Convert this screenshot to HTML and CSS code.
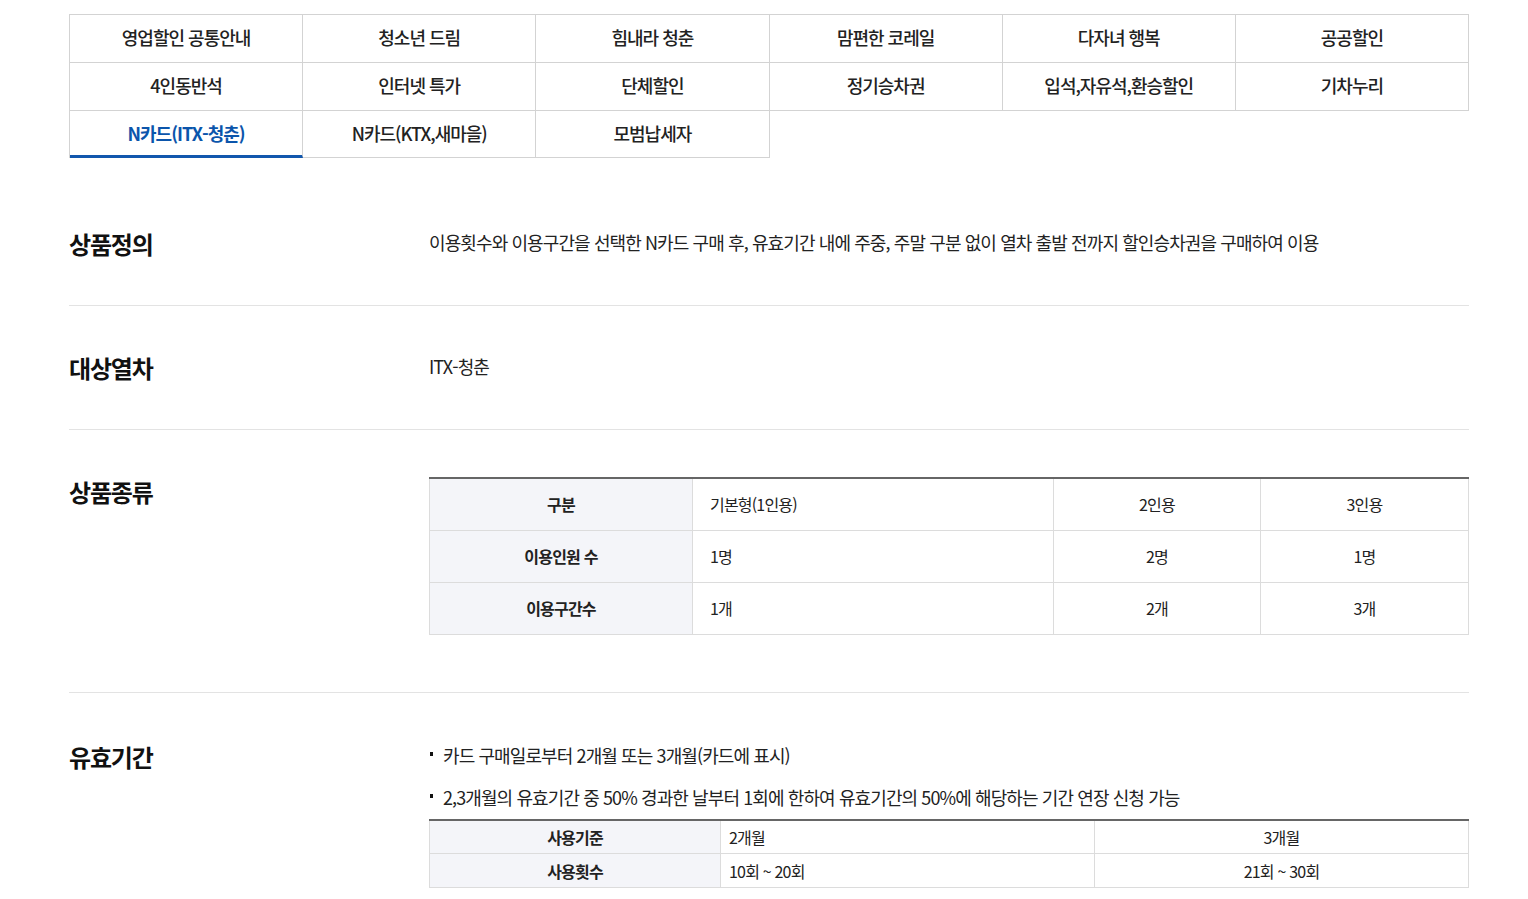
FILE: index.html
```html
<!DOCTYPE html>
<html lang="ko">
<head>
<meta charset="utf-8">
<title>N카드(ITX-청춘)</title>
<link rel="stylesheet" href="styles.css">
</head>
<body>
<div class="page">
  <ul class="tabs">
    <li class="tab">영업할인 공통안내</li>
    <li class="tab">청소년 드림</li>
    <li class="tab">힘내라 청춘</li>
    <li class="tab">맘편한 코레일</li>
    <li class="tab">다자녀 행복</li>
    <li class="tab">공공할인</li>
    <li class="tab">4인동반석</li>
    <li class="tab">인터넷 특가</li>
    <li class="tab">단체할인</li>
    <li class="tab">정기승차권</li>
    <li class="tab">입석,자유석,환승할인</li>
    <li class="tab">기차누리</li>
    <li class="tab last-row active">N카드(ITX-청춘)</li>
    <li class="tab last-row">N카드(KTX,새마을)</li>
    <li class="tab last-row">모범납세자</li>
  </ul>

  <section class="sec first">
    <h3 class="label">상품정의</h3>
    <div class="body"><p class="txt">이용횟수와 이용구간을 선택한 N카드 구매 후, 유효기간 내에 주중, 주말 구분 없이 열차 출발 전까지 할인승차권을 구매하여 이용</p></div>
  </section>

  <section class="sec">
    <h3 class="label">대상열차</h3>
    <div class="body"><p class="txt">ITX-청춘</p></div>
  </section>

  <section class="sec">
    <h3 class="label">상품종류</h3>
    <div class="body">
      <table class="tbl t1">
        <colgroup><col class="c1a"><col class="c1b"><col class="c1c"><col class="c1d"></colgroup>
        <tr><th>구분</th><td class="left">기본형(1인용)</td><td>2인용</td><td>3인용</td></tr>
        <tr><th>이용인원 수</th><td class="left">1명</td><td>2명</td><td>1명</td></tr>
        <tr><th>이용구간수</th><td class="left">1개</td><td>2개</td><td>3개</td></tr>
      </table>
    </div>
  </section>

  <section class="sec last">
    <h3 class="label">유효기간</h3>
    <div class="body">
      <ul class="bullets">
        <li>카드 구매일로부터 2개월 또는 3개월(카드에 표시)</li>
        <li>2,3개월의 유효기간 중 50% 경과한 날부터 1회에 한하여 유효기간의 50%에 해당하는 기간 연장 신청 가능</li>
      </ul>
      <table class="tbl t2">
        <colgroup><col class="c2a"><col class="c2b"><col class="c2c"></colgroup>
        <tr><th>사용기준</th><td class="left">2개월</td><td>3개월</td></tr>
        <tr><th>사용횟수</th><td class="left">10회 ~ 20회</td><td>21회 ~ 30회</td></tr>
      </table>
    </div>
  </section>
</div>
</body>
</html>
```

FILE: styles.css
```css
* { box-sizing: border-box; }
html, body { margin: 0; padding: 0; background: #fff; }
body {
  font-family: "Noto Sans CJK KR", "Noto Sans", sans-serif;
  color: #222;
}
.page {
  width: 1400px;
  margin-left: 69px;
  padding-top: 14px;
}
.tabs {
  list-style: none;
  margin: 0;
  padding: 0;
  display: grid;
  grid-template-columns: repeat(6, 1fr);
  border-top: 1px solid #d3d3d3;
  border-left: 1px solid #d3d3d3;
}
.tab {
  height: 48px;
  padding-bottom: 3px;
  display: flex;
  align-items: center;
  justify-content: center;
  border-right: 1px solid #d3d3d3;
  border-bottom: 1px solid #d3d3d3;
  font-size: 18px;
  font-weight: 500;
  letter-spacing: -1px;
  color: #222;
}
.tab.last-row { height: 47px; }
.tab.active {
  color: #0b55ab;
  font-weight: 700;
  border-bottom: 3px solid #1257ad;
  padding-bottom: 1px;
}
.sec {
  display: flex;
  border-top: 1px solid #e3e3e3;
  padding: 47px 0 46px;
}
.sec.first {
  border-top: 0;
  margin-top: 24px;
}
.sec.last { padding-top: 49px; }
.label {
  width: 360px;
  flex: none;
  margin: 0;
  font-size: 24px;
  line-height: 30px;
  font-weight: 700;
  letter-spacing: -1.2px;
  color: #111;
}
.body { flex: 1; }
.txt {
  margin: 0;
  font-size: 18px;
  line-height: 26px;
  letter-spacing: -0.9px;
  color: #222;
}
.tbl {
  width: 100%;
  border-collapse: collapse;
  table-layout: fixed;
  border-top: 2px solid #666;
  font-size: 16px;
  letter-spacing: -0.8px;
  color: #222;
}
.tbl th, .tbl td {
  border: 1px solid #dcdcdc;
  text-align: center;
  font-weight: 400;
  padding: 0;
}
.tbl th {
  background: #f4f5f9;
  font-weight: 700;
}
.tbl td.left { text-align: left; }
.t1 { margin-top: 0; margin-bottom: 11px; }
.t1 tr { height: 52px; }
.t1 td.left { padding-left: 17px; }
.c1a { width: 263px; }
.c1b { width: 361px; }
.c1c { width: 207px; }
.c1d { width: 208px; }
.t2 { margin-top: 9px; }
.t2 tr { height: 34px; }
.t2 td.left { padding-left: 8px; }
.c2a { width: 291px; }
.c2b { width: 374px; }
.c2c { width: 374px; }
.bullets {
  list-style: none;
  margin: 0;
  padding: 0;
}
.bullets li {
  position: relative;
  padding-left: 14px;
  font-size: 18px;
  line-height: 26px;
  letter-spacing: -0.9px;
  color: #222;
}
.bullets li + li { margin-top: 16px; }
.bullets li::before {
  content: "";
  position: absolute;
  left: 1px;
  top: 10px;
  width: 3px;
  height: 4px;
  background: #111;
}
```
